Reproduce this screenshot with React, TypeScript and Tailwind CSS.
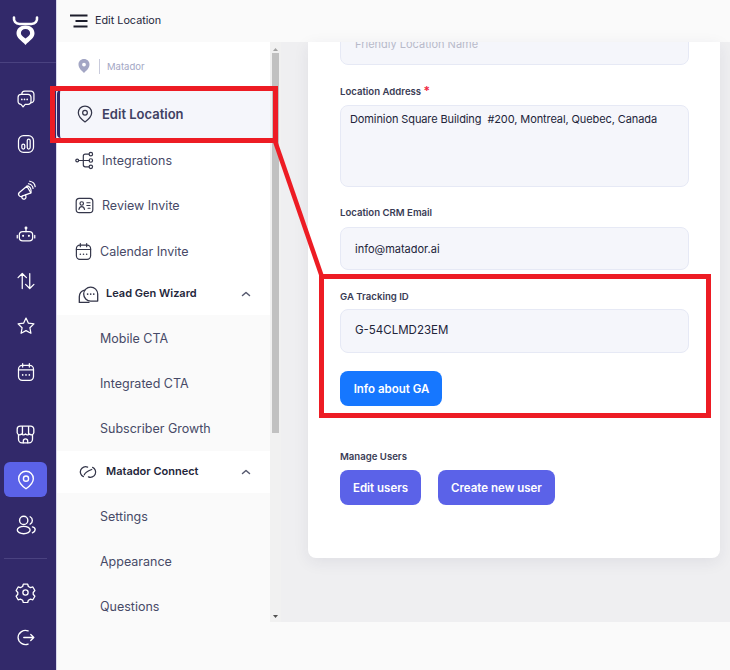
import React from "react";

const S = { fill: "none", stroke: "currentColor", strokeWidth: 1.5, strokeLinecap: "round", strokeLinejoin: "round" } as const;

function Ico({ size = 20, children, className = "" }: { size?: number; children: React.ReactNode; className?: string }) {
  return (
    <svg width={size} height={size} viewBox="0 0 24 24" {...S} className={className}>
      {children}
    </svg>
  );
}

const Pin = () => (
  <>
    <path d="M12 2.500c-4.600 0-8 3.500-8 8 0 5 4.500 8.500 8 11 3.500-2.500 8-6 8-11 0-4.500-3.400-8-8-8z" />
    <circle cx="12" cy="10.500" r="2.800" />
  </>
);

const rail = [
  { key: "chat", node: <><path d="M7 6.500V6a3.500 3.500 0 0 1 3.500-3.500H18A3.500 3.500 0 0 1 21.500 6v7a3.500 3.500 0 0 1-3.500 3.500" /><path d="M6 6.500h8.500A3.500 3.500 0 0 1 18 10v5a3.500 3.500 0 0 1-3.500 3.500H11l-2.500 3-2.500-3A3.500 3.500 0 0 1 2.500 15v-5A3.500 3.500 0 0 1 6 6.500z" /><path d="M7 12.500h.01M10.200 12.500h.01M13.400 12.500h.01" strokeWidth={2} /></> },
  { key: "stats", node: <><rect x="3" y="2" width="18" height="20" rx="6" /><rect x="7" y="12" width="3.500" height="6" rx="1.750" /><rect x="13.500" y="6" width="3.500" height="12" rx="1.750" /></> },
  { key: "mega", node: <><path d="M13 7.500 4 15a2.500 2.500 0 0 0 4 4l10-3.500z" /><path d="M13 7.500c1.500-1 4.500 1 5 4.500 .2 1.500 0 3-.500 3.500" /><path d="M7.500 19a2.500 2.500 0 1 0 4.500 1.500l-.500-2.500" /><path d="M15 4.500c3 .5 5 2.500 5.500 5.500M16.500 1.500c3.500.5 6 3 6.500 6.500" /></> },
  { key: "bot", node: <><rect x="4" y="8" width="16" height="11" rx="4" /><path d="M12 8V4.500M1.500 12.500v3M22.500 12.500v3" /><circle cx="12" cy="3.500" r="1" /><path d="M8.500 13h.01M15.500 13h.01" strokeWidth={2.500} /></> },
  { key: "arrows", node: <path d="M7.500 21V3.500M2.500 8l5-5 5 5M16.500 3v17.500M11.500 16l5 5 5-5" /> },
  { key: "star", node: <path d="m12 2.500 2.900 6.100 6.600.9-4.800 4.600 1.200 6.600L12 17.600l-5.900 3.100 1.200-6.600-4.800-4.600 6.600-.9z" /> },
  { key: "cal", node: <><rect x="3" y="4" width="18" height="18" rx="4.500" /><path d="M3 9.500h18M8 2v4M16 2v4" /><path d="M8 15.500h.01M12 15.500h.01M16 15.500h.01" strokeWidth={2} /></> },
];

const Shop = () => (
  <Ico size={21}>
    <path d="M6 2.500h12a3.500 3.500 0 0 1 3.500 3.500v4a2.800 2.800 0 0 1-4.800 1.500 3.300 3.300 0 0 1-4.700 0 3.300 3.300 0 0 1-4.700 0A2.800 2.800 0 0 1 2.500 10V6A3.500 3.500 0 0 1 6 2.500z" />
    <path d="M4 12.500v5A4 4 0 0 0 8 21.500h8a4 4 0 0 0 4-4v-5" />
    <path d="M8.500 3v8M15.500 3v8" />
    <path d="M9.500 21.500v-2a2.500 2.500 0 0 1 5 0v2" />
  </Ico>
);

const Users = () => (
  <Ico size={22}>
    <circle cx="9.500" cy="7" r="4.500" />
    <ellipse cx="9.500" cy="17.500" rx="7" ry="4" />
    <path d="M16.500 3a4.500 4.500 0 0 1 0 8M19 14c2 .5 3 1.800 3 3.200s-1 2.500-3 3.300" />
  </Ico>
);

const Gear = () => (
  <Ico size={21}>
    <circle cx="12" cy="12" r="3" />
    <path d="M9.500 2.500h5l.8 2.600 2.500 1.300 2.600-.7 2.300 4-1.900 2.300v2l1.900 2.300-2.300 4-2.600-.7-2.500 1.300-.8 2.600h-5l-.8-2.600-2.500-1.300-2.600.7-2.300-4 1.900-2.300v-2L1.300 9.700l2.300-4 2.600.7 2.500-1.300z" />
  </Ico>
);

const Logout = () => (
  <Ico size={21}>
    <path d="M15 4.500A8.500 8.500 0 0 0 3.500 12a8.500 8.500 0 0 0 11.500 7.500" />
    <path d="M10 12h11.500M18 8.500l3.500 3.500-3.500 3.500" />
  </Ico>
);

function RailBtn({ children, active = false }: { children: React.ReactNode; active?: boolean }) {
  return (
    <div className={`flex w-[51px] items-center justify-center text-white ${active ? "ml-1 !w-[43px] h-[35px] rounded-md bg-[#5b62e8]" : "h-[45.500px]"}`}>
      {children}
    </div>
  );
}

function Row({ label, icon }: { label: string; icon: React.ReactNode }) {
  return (
    <div className="flex h-[45px] items-center pl-[18px] text-[12.500px] text-[#474a67]">
      <span className="flex w-[27px] justify-start text-[#34364a]">{icon}</span>
      <span className="pt-[2px]">{label}</span>
    </div>
  );
}

function Sub({ label }: { label: string }) {
  return (
    <div className="flex h-[45.330px] items-center bg-[#fafafa] pl-[43px] pt-[3px] text-[12.500px] text-[#474a67]">{label}</div>
  );
}

function Group({ label, icon }: { label: string; icon: React.ReactNode }) {
  return (
    <div className="flex h-[42px] items-center pl-[21px] pr-[19px] text-[11px] font-semibold text-[#24263a]">
      <span className="flex w-[28px] text-[#34364a]">{icon}</span>
      <span className="flex-1 pb-[2px]">{label}</span>
      <svg width="10" height="6" viewBox="0 0 10 6" fill="none" stroke="#55586e" strokeWidth="1.500" strokeLinecap="round" strokeLinejoin="round">
        <path d="M1.500 4.500 5 1.500l3.500 3" />
      </svg>
    </div>
  );
}

const Label = ({ children }: { children: React.ReactNode }) => (
  <div className="h-[14px] pt-[1px] text-[9.600px] font-semibold leading-[14px] text-[#3a3c55]">{children}</div>
);

const boxCls = "w-[349px] rounded-lg border border-[#e6e9f5] bg-[#f5f6fb] text-[11px] text-[#22243a]";

export default function App() {
  return (
    <div className="relative flex h-[670px] w-[730px] overflow-hidden bg-[#fafafa] font-['Inter',sans-serif]">
      <aside className="flex w-[57px] shrink-0 flex-col border-r border-[#d9d8ec] bg-[#32296a]">
        <div className="flex h-[63px] w-full items-center border-b border-[#4a4280] pl-[12px]">
          <svg width="27" height="30" viewBox="0 0 27 30" fill="none">
            <path d="M2 1.500C1.500 5 3.500 8 7.500 8h12c4 0 6-3 5.500-6.500" stroke="white" strokeWidth="2.600" strokeLinecap="round" />
            <path d="M13.500 9.500c-5.500 0-9 3.200-9 7.800 0 5 5 7.200 9 11.700 4-4.500 9-6.700 9-11.700 0-4.600-3.500-7.800-9-7.800zm0 3.500c2.800 0 4.600 1.700 4.600 4.200 0 2.300-2.300 3.300-4.600 5.300-2.300-2-4.600-3-4.600-5.300 0-2.500 1.800-4.200 4.600-4.200z" fill="white" fillRule="evenodd" />
          </svg>
        </div>
        <div className="pt-[13px]">
          {rail.map((r) => (
            <RailBtn key={r.key}><Ico size={20}>{r.node}</Ico></RailBtn>
          ))}
        </div>
        <div className="mt-[17px]"><RailBtn><Shop /></RailBtn></div>
        <div className="mt-[5px]"><RailBtn active><Ico size={22}><Pin /></Ico></RailBtn></div>
        <div className="mt-[5px]"><RailBtn><Users /></RailBtn></div>
        <div className="ml-1 mt-[10px] w-[43px] border-t border-[#4a4280]" />
        <div className="mt-[11px]"><RailBtn><Gear /></RailBtn></div>
        <div><RailBtn><Logout /></RailBtn></div>
      </aside>

      <div className="flex min-w-0 flex-1 flex-col">
        <header className="flex h-[42px] shrink-0 items-center bg-[#fafafa] pl-[13px] text-[10.800px] text-[#24263a]">
          <svg width="18" height="14" viewBox="0 0 18 14" fill="none" stroke="#1c1d2b" strokeWidth="1.800" className="mr-[7px]">
            <path d="M0 1.500h17.500M5.500 7h12M3.500 12.500h14" />
          </svg>
          Edit Location
        </header>

        <div className="flex h-[580px] shrink-0">
          <nav className="w-[213px] shrink-0 overflow-hidden bg-white">
            <div className="flex h-[48px] items-center pl-[21px] text-[9.500px] text-[#a3a6c4]">
              <svg width="12" height="14" viewBox="0 0 12 14" className="mr-[9px]">
                <path fillRule="evenodd" fill="#a3a6c4" d="M6 0C2.700 0 .5 2.400.5 5.500c0 3.500 3 6 5.500 8.500 2.500-2.500 5.500-5 5.500-8.500C11.500 2.400 9.300 0 6 0zm0 3.700a1.900 1.900 0 1 1 0 3.800 1.900 1.900 0 0 1 0-3.800z" />
              </svg>
              <span className="mr-[7px] h-[15px] border-l border-[#c9cbdc]" />
              <span className="pt-[2px]">Matador</span>
            </div>
            <div className="flex h-[48px] items-center rounded-l-sm border-l-[3px] border-[#32296a] bg-[#f5f6fb] pl-[15px] text-[13px] font-semibold text-[#3f4163]">
              <span className="flex w-[27px] text-[#34364a]"><Ico size={20}><Pin /></Ico></span>
              <span className="pt-[2px]">Edit Location</span>
            </div>
            <Row label="Integrations" icon={
              <Ico size={19}>
                <circle cx="2.800" cy="12" r="1.800" /><circle cx="20" cy="4" r="2.200" /><circle cx="20" cy="12" r="2.200" /><circle cx="20" cy="20" r="2.200" />
                <path d="M4.600 12h13.200M10.500 12V6.500A2.500 2.500 0 0 1 13 4h4.800M10.500 12v5.500A2.500 2.500 0 0 0 13 20h4.800" />
              </Ico>
            } />
            <Row label="Review Invite" icon={
              <Ico size={19}>
                <rect x="1.500" y="3" width="21" height="18" rx="4" />
                <circle cx="8.500" cy="9.500" r="2.200" /><path d="M5 17c.5-2.300 1.800-3.500 3.500-3.500s3 1.200 3.500 3.500M15 8.500h4M15 12h4M16.500 15.500h2.500" />
              </Ico>
            } />
            <div className="flex h-[45px] items-center pl-[17px] pt-[1px] text-[12.500px] text-[#474a67]">
              <span className="flex w-[26px] text-[#34364a]"><Ico size={19}>{rail[6].node}</Ico></span>
              <span className="pt-[3px]">Calendar Invite</span>
            </div>
            <Group label="Lead Gen Wizard" icon={
              <Ico size={21}>
                <path d="M14.500 3.500a8 8 0 0 0 0 16h8v-8a8 8 0 0 0-8-8z" />
                <path d="M7.500 7A8 8 0 0 0 1.500 14.500V21h11" />
                <path d="M11 11.500h.01M14.500 11.500h.01M18 11.500h.01" strokeWidth={2} />
              </Ico>
            } />
            <Sub label="Mobile CTA" />
            <Sub label="Integrated CTA" />
            <Sub label="Subscriber Growth" />
            <Group label="Matador Connect" icon={
              <Ico size={20}>
                <path d="M11.500 6.200A6 6 0 1 0 6.500 17.500" />
                <path d="M12.500 17.800A6 6 0 1 0 17.500 6.500" />
                <path d="M7.500 15.500c1-3.500 5-5 9-6.500" />
              </Ico>
            } />
            <Sub label="Settings" />
            <Sub label="Appearance" />
            <Sub label="Questions" />
          </nav>

          <div className="flex w-[11px] shrink-0 flex-col items-center bg-[#f1f1f1]">
            <svg width="7" height="11" viewBox="0 0 7 11"><path d="M1 9h5L3.500 6z" fill="#a3a3a3" /></svg>
            <div className="h-[380px] w-[7px] bg-[#c1c1c1]" />
            <div className="flex-1" />
            <svg width="7" height="11" viewBox="0 0 7 11" className="mb-[1px]"><path d="M1 5h5L3.500 8z" fill="#505050" /></svg>
          </div>

          <main className="flex flex-1 items-start bg-[#efeff1] pl-[27px] pr-[10px]">
            <section className="h-[516px] w-[412px] overflow-hidden rounded-b-lg bg-white pl-[32px] shadow-[0_4px_16px_rgba(40,40,80,0.08)]">
              <div className={`${boxCls} -mt-[19px] flex h-[42px] items-center px-[14px] pt-[1px] text-[#b8bac9]`}>Friendly Location Name</div>
              <div className="mt-[19px]"><Label>Location Address <span className="text-[12px] leading-[10px] text-[#f0243e]">*</span></Label></div>
              <div className={`${boxCls} mt-[7px] h-[82px] whitespace-nowrap pl-[9px] pt-[5px] tracking-[-0.1px]`}>Dominion Square Building&nbsp; #200, Montreal, Quebec, Canada</div>
              <div className="mt-[18px]"><Label>Location CRM Email</Label></div>
              <div className={`${boxCls} mt-[8px] flex h-[43px] items-center px-[14px] pt-[2px]`}>info@matador.ai</div>
              <div className="mt-[19px]"><Label>GA Tracking ID</Label></div>
              <div className={`${boxCls} mt-[6px] flex h-[44px] items-center px-[14px] !text-[11.500px]`}>G-54CLMD23EM</div>
              <button className="mt-[18px] flex h-[35px] w-[102px] items-center justify-center rounded-lg bg-[#1677ff] pl-[1px] pt-[2px] text-[11.500px] font-semibold text-white">Info about GA</button>
              <div className="mt-[43px]"><Label>Manage Users</Label></div>
              <div className="mt-[7px] flex gap-[17px]">
                <button className="h-[35px] w-[81px] rounded-lg bg-[#5b62e8] pt-[2px] text-[11.500px] font-semibold text-white">Edit users</button>
                <button className="h-[35px] w-[117px] rounded-lg bg-[#5b62e8] pt-[2px] text-[11.500px] font-semibold text-white">Create new user</button>
              </div>
            </section>
          </main>
        </div>
      </div>

      <div className="absolute left-[50px] top-[86px] h-[57px] w-[228px] border-[5px] border-[#ed1c24]" />
      <div className="absolute left-[319px] top-[274px] h-[144px] w-[392px] border-[5px] border-[#ed1c24]" />
      <svg className="pointer-events-none absolute left-0 top-0" width="730" height="670">
        <path d="M275 141 322 277" stroke="#ed1c24" strokeWidth="4.500" fill="none" />
      </svg>
    </div>
  );
}
